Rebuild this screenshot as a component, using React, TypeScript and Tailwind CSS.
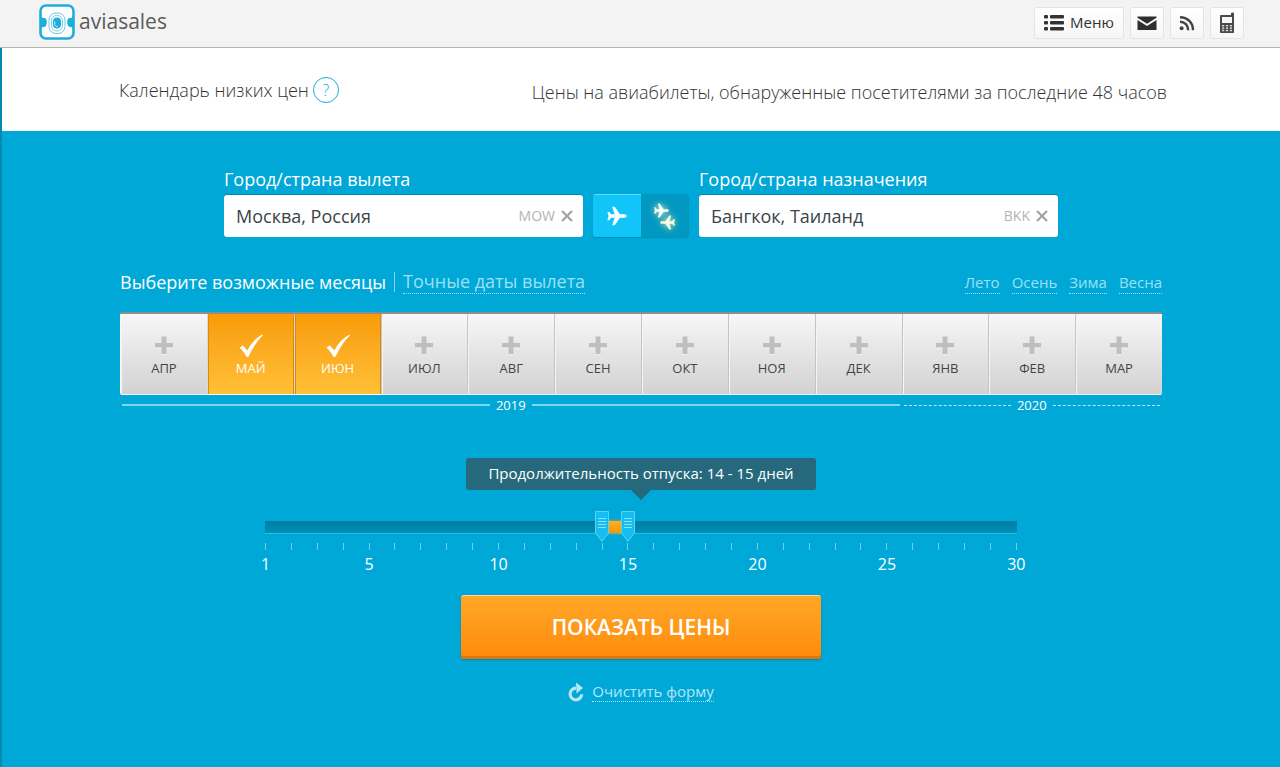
import { useState } from "react";
import clsx from "clsx";

const MONTHS = ["АПР", "МАЙ", "ИЮН", "ИЮЛ", "АВГ", "СЕН", "ОКТ", "НОЯ", "ДЕК", "ЯНВ", "ФЕВ", "МАР"];
const SEASONS = ["Лето", "Осень", "Зима", "Весна"];
const MAX_DAYS = 30;
const DAYS = Array.from({ length: MAX_DAYS }, (_, i) => i + 1);

const toPercent = (day: number) => ((day - 1) / (MAX_DAYS - 1)) * 100;

const PLANE =
  "M22.500 12c0-1-1.200-1.800-2.700-1.800h-4.600L9.500 2H6.800l2.600 8.200H5.600L3.400 7.500H1.500L2.800 12l-1.300 4.500h1.900l2.200-2.700h3.800L6.800 22h2.700l5.700-8.200h4.600c1.500 0 2.700-.8 2.700-1.800z";

const Logo = () => (
  <svg viewBox="0 0 36 36" className="size-9 shrink-0" aria-hidden="true">
    <rect x="1.500" y="1.500" width="33" height="33" rx="5.500" fill="#fff" stroke="#1eaedb" strokeWidth="2.600" />
    <path d="M2 12c.4 1.600 1.600 2 3 2 2 0 2.800 1.500 2.800 4s-.8 5-2.800 5c-1.400 0-2.600.5-3 2z" fill="#1eaedb" />
    <path d="M34 12c-.4 1.600-1.600 2-3 2-2 0-2.800 1.500-2.800 4s.8 5 2.800 5c1.400 0 2.600.5 3 2z" fill="#1eaedb" />
    <rect x="10" y="9" width="16" height="20.500" rx="7" fill="#fff" stroke="#6cc8e6" strokeWidth="1" />
    <rect x="12.500" y="11.500" width="11" height="15.500" rx="5.200" fill="none" stroke="#6cc8e6" strokeWidth=".9" />
    <rect x="14" y="13.500" width="8" height="11" rx="4" fill="#1eaedb" />
    <path d="M15.800 17.500v3c.6 1.600 1.700 2.200 3 2.100" fill="none" stroke="#d8f2fa" strokeWidth=".9" />
  </svg>
);

const ListIcon = () => (
  <svg viewBox="0 0 20 16" className="h-4 w-5" fill="#333" aria-hidden="true">
    {[0, 6, 12].map((y) => (
      <g key={y}>
        <rect x="0" y={y} width="4" height="3.500" rx="1" />
        <rect x="6" y={y} width="14" height="3.500" rx="1" />
      </g>
    ))}
  </svg>
);

const MailIcon = () => (
  <svg viewBox="0 0 20 16" className="h-4 w-5" fill="#2f2f2f" aria-hidden="true">
    <path d="M.5 1.500h19v1.300L10 8.800.5 2.800z" />
    <path d="M.5 4.900 10 10.900l9.500-6V15H.5z" />
  </svg>
);

const RssIcon = () => (
  <svg viewBox="0 0 16 16" className="size-4" fill="none" stroke="#444" aria-hidden="true">
    <circle cx="2.600" cy="13.300" r="2" fill="#444" stroke="none" />
    <path d="M1 6.800c4.800 0 8.200 3.500 8.200 8.500" strokeWidth="2.400" />
    <path d="M1 2.200c7.600 0 13 5.500 13 13.100" strokeWidth="2.400" />
  </svg>
);

const PhoneIcon = () => (
  <svg viewBox="0 0 16 22" className="h-[22px] w-4" aria-hidden="true">
    <path d="M12 1.500c0-1.300 3-1.300 3 0V20c0 .6-.4 1-1 1H2c-.6 0-1-.4-1-1V4c0-.6.400-1 1-1h10z" fill="#4a4a4a" />
    <rect x="3" y="5" width="10" height="6" fill="#f7f7f7" />
    {[13, 15.400, 17.800].map((y) => (
      <g key={y} fill="#ddd">
        <rect x="3" y={y} width="2.200" height="1.400" />
        <rect x="6.900" y={y} width="2.200" height="1.400" />
        <rect x="10.800" y={y} width="2.200" height="1.400" />
      </g>
    ))}
  </svg>
);

const OneWayIcon = () => (
  <svg viewBox="0 0 24 24" className="size-[22px]" fill="#fff" aria-hidden="true">
    <path d={PLANE} />
  </svg>
);

const RoundTripIcon = () => (
  <svg viewBox="0 0 30 32" className="h-8 w-[30px] drop-shadow-[0_0_3px_#fff3b0]" aria-hidden="true">
    <path d={PLANE} fill="#fff" transform="translate(3 2) scale(.7)" />
    <path d={PLANE} fill="#fffce0" transform="translate(26 14) scale(-.7 .7)" />
  </svg>
);

const CheckIcon = () => (
  <svg viewBox="0 0 26 24" className="h-6 w-[26px]" aria-hidden="true">
    <path d="M1.500 13.500 5 11.400l4.300 5.200C13 9.500 18 4 24.500.6l.5.600C19 7 14.500 14 10.500 22.800H8.400C6.500 19 4.300 16 1.500 13.500z" fill="#fff" />
  </svg>
);

const PlusIcon = () => (
  <svg viewBox="0 0 20 20" className="size-5" aria-hidden="true">
    <path d="M7.500 1.500h5v6h6v5h-6v6h-5v-6h-6v-5h6z" fill="#fff" opacity=".8" />
    <path d="M7.500.5h5v6.500h6.500v4.500h-6.500V18h-5v-6.500H1V7h6.500z" fill="#bfbfbf" />
  </svg>
);

const ReloadIcon = () => (
  <svg viewBox="0 0 16 20" className="h-5 w-4" aria-hidden="true">
    <path d="M13.700 12.200A5.800 5.800 0 1 1 8 6.200" fill="none" stroke="#b5e6f6" strokeWidth="3.200" />
    <path d="M8 .5l7 5.500L8.500 11.500z" fill="#b5e6f6" />
  </svg>
);

const SliderHandle = ({ day }: { day: number }) => (
  <svg
    viewBox="0 0 14 31"
    className="absolute -top-2.5 h-[31px] w-3.5 -translate-x-1/2"
    style={{ left: `${toPercent(day)}%` }}
    aria-hidden="true"
  >
    <path d="M.5.5h13v21.500L7 30.300.5 22z" fill="#16bdf0" stroke="#58d3f7" />
    <path d="M3 7.500h8M3 10.500h8M3 13.500h8M3 16.500h8" stroke="#8be2fb" />
  </svg>
);

interface CityFieldProps {
  id: string;
  label: string;
  code: string;
  initial: string;
}

const CityField = ({ id, label, code, initial }: CityFieldProps) => {
  const [value, setValue] = useState(initial);

  return (
    <div className="min-w-0 flex-1">
      <label htmlFor={id} className="mb-1 block text-lg leading-6 text-white">
        {label}
      </label>
      <div className="flex h-[42px] items-center rounded-[3px] bg-white pr-2 pl-3 shadow-[0_-1px_0_#0089b3]">
        <input
          id={id}
          value={value}
          onChange={(e) => setValue(e.target.value)}
          className="min-w-0 flex-1 bg-transparent text-lg leading-6 text-[#39444a] outline-none"
        />
        <span className="text-sm text-[#b3b3b3]">{code}</span>
        <button type="button" aria-label="Очистить" onClick={() => setValue("")} className="ml-1 p-0.5">
          <svg viewBox="0 0 12 12" className="size-3" stroke="#a3a3a3" strokeWidth="2.200" aria-hidden="true">
            <path d="M1 1l10 10M11 1L1 11" />
          </svg>
        </button>
      </div>
    </div>
  );
};

const Header = () => {
  const button =
    "flex h-8 items-center justify-center rounded-xs border border-[#e4e4e4] bg-gradient-to-b from-white to-[#f6f6f6]";

  return (
    <header className="flex h-12 items-center justify-between border-b border-[#b5b5b5] bg-[#f3f3f3] pr-9 pb-0.5 pl-[39px]">
      <a href="#" className="flex items-center gap-1 pb-0.5 text-[21px] leading-6 text-[#5a5a5a]">
        <Logo />
        <span className="pb-0.5">aviasales</span>
      </a>
      <nav className="flex gap-1.5">
        <button type="button" className={clsx(button, "w-[90px] gap-1.5 text-[15px] text-[#333]")}>
          <ListIcon />
          Меню
        </button>
        <button type="button" aria-label="Почта" className={clsx(button, "w-[34px]")}>
          <MailIcon />
        </button>
        <button type="button" aria-label="RSS" className={clsx(button, "w-[34px]")}>
          <RssIcon />
        </button>
        <button type="button" aria-label="Телефон" className={clsx(button, "w-[34px]")}>
          <PhoneIcon />
        </button>
      </nav>
    </header>
  );
};

const MonthPicker = () => {
  const [selected, setSelected] = useState<string[]>(["МАЙ", "ИЮН"]);

  const toggle = (month: string) =>
    setSelected((prev) => (prev.includes(month) ? prev.filter((m) => m !== month) : [...prev, month]));

  return (
    <>
      <div className="relative mt-[18px] grid grid-cols-12 overflow-hidden rounded-xs border-t-2 border-b border-t-[#8d8d8d] border-b-white">
        {MONTHS.map((month) => {
          const active = selected.includes(month);

          return (
            <label
              key={month}
              className={clsx(
                "relative flex h-20 cursor-pointer flex-col items-center border-l bg-gradient-to-b pt-5 text-[13px] leading-5 first:border-l-white",
                active
                  ? "border-[#d9d9d9] from-[#f99b04] to-[#ffc036] text-white shadow-[inset_1px_0_0_#d98b10,inset_-1px_0_0_#d98b10]"
                  : "border-[#c4c4c4] from-[#f7f7f7] to-[#d2d2d2] text-[#444] shadow-[inset_1px_0_0_#f5f5f5]"
              )}
            >
              <input type="checkbox" checked={active} onChange={() => toggle(month)} className="sr-only" />
              <span className="flex h-6 items-center">{active ? <CheckIcon /> : <PlusIcon />}</span>
              {month}
            </label>
          );
        })}
      </div>
      <div className="grid grid-cols-12 text-[13px] leading-5 text-white">
        <div className="col-span-9 flex items-center gap-1.5 px-0.5">
          <span className="flex-1 border-t-2 border-[#7fd6f0]" />
          2019
          <span className="flex-1 border-t-2 border-[#7fd6f0]" />
        </div>
        <div className="col-span-3 flex items-center gap-1.5 px-0.5">
          <span className="flex-1 border-t border-dashed border-[#c0ebf8]" />
          2020
          <span className="flex-1 border-t border-dashed border-[#c0ebf8]" />
        </div>
      </div>
    </>
  );
};

const DurationSlider = () => {
  const [from, setFrom] = useState(14);
  const [to, setTo] = useState(15);
  const range =
    "pointer-events-none absolute -inset-x-[7px] -top-2.5 h-8 w-[calc(100%+14px)] cursor-pointer opacity-0 [&::-webkit-slider-thumb]:pointer-events-auto";

  return (
    <div className="mx-auto mt-[43px] max-w-[752px]">
      <div className="relative mx-auto h-8 w-[350px] rounded-[3px] bg-[#26697c] text-center text-[15px] leading-[30px] text-white">
        Продолжительность отпуска: {from} - {to} дней
        <span className="absolute top-full left-1/2 -translate-x-1/2 border-x-10 border-t-10 border-x-transparent border-t-[#26697c]" />
      </div>
      <div className="relative mt-[31px] h-3 bg-gradient-to-b from-[#007da3] to-[#0090b8] shadow-[0_1px_0_#2ebbe2]">
        <span
          className="absolute inset-y-0 bg-gradient-to-b from-[#ffb020] to-[#f99300] shadow-[0_0_3px_#b5a94a]"
          style={{ left: `${toPercent(from)}%`, right: `${100 - toPercent(to)}%` }}
        />
        <SliderHandle day={from} />
        <SliderHandle day={to} />
        <input
          type="range"
          aria-label="Минимум дней"
          min={1}
          max={MAX_DAYS}
          value={from}
          onChange={(e) => setFrom(Math.min(Number(e.target.value), to))}
          className={range}
        />
        <input
          type="range"
          aria-label="Максимум дней"
          min={1}
          max={MAX_DAYS}
          value={to}
          onChange={(e) => setTo(Math.max(Number(e.target.value), from))}
          className={range}
        />
      </div>
      <div className="mt-2.5 flex h-8 justify-between text-base leading-6 text-white">
        {DAYS.map((day) => (
          <div key={day} className="flex w-px flex-col items-center">
            <span className="h-[7px] w-px shrink-0 bg-[#6fd2ee]" />
            {(day === 1 || day % 5 === 0) && <span className="mt-0.5">{day}</span>}
          </div>
        ))}
      </div>
    </div>
  );
};

export default function App() {
  const [roundTrip, setRoundTrip] = useState(false);

  return (
    <div className="flex min-h-screen flex-col bg-[#00a8d8] font-['Open_Sans','Noto_Sans',sans-serif]">
      <Header />
      <div className="flex-1 border-l-2 border-[#0089b3]">
        <section className="bg-white">
          <div className="mx-auto flex h-[83px] max-w-[1052px] items-center justify-between text-lg font-light text-[#333]">
            <h1 className="flex items-center gap-1 pl-1">
              Календарь низких цен
              <button
                type="button"
                aria-label="Справка"
                className="flex size-[26px] items-center justify-center rounded-full border border-[#1eaedb] text-base text-[#1eaedb]"
              >
                ?
              </button>
            </h1>
            <p className="pt-1">Цены на авиабилеты, обнаруженные посетителями за последние 48 часов</p>
          </div>
        </section>

        <form className="mx-auto max-w-[1042px] pt-9 pb-10" onSubmit={(e) => e.preventDefault()}>
          <div className="mx-auto flex max-w-[834px] items-end gap-2.5">
            <CityField id="origin" label="Город/страна вылета" code="MOW" initial="Москва, Россия" />
            <div className="flex h-[43px] w-24 overflow-hidden rounded-[3px] shadow-[0_1px_1px_#0090ba]">
              <button
                type="button"
                aria-label="В одну сторону"
                onClick={() => setRoundTrip(false)}
                className={clsx("flex flex-1 items-center justify-center", roundTrip ? "bg-[#0098c1]" : "border-t border-[#5bdcff] bg-[#12c5f8]")}
              >
                <OneWayIcon />
              </button>
              <button
                type="button"
                aria-label="Туда и обратно"
                onClick={() => setRoundTrip(true)}
                className={clsx("flex flex-1 items-center justify-center", roundTrip ? "border-t border-[#5bdcff] bg-[#12c5f8]" : "bg-[#0098c1]")}
              >
                <RoundTripIcon />
              </button>
            </div>
            <CityField id="destination" label="Город/страна назначения" code="BKK" initial="Бангкок, Таиланд" />
          </div>

          <div className="mt-[33px] flex items-center justify-between">
            <div className="flex items-center gap-2 text-lg leading-6 text-white">
              <h2>Выберите возможные месяцы</h2>
              <span className="h-5 w-px bg-[#7fd6f0]" />
              <a href="#" className="border-b border-dotted border-[#a8e2f4] leading-[23px] text-[#9be0f5]">
                Точные даты вылета
              </a>
            </div>
            <div className="flex gap-3 text-[15px]">
              {SEASONS.map((season) => (
                <a key={season} href="#" className="border-b border-dotted border-[#a8e2f4] leading-[22px] text-[#9be0f5]">
                  {season}
                </a>
              ))}
            </div>
          </div>

          <MonthPicker />
          <DurationSlider />

          <div className="mt-5 flex flex-col items-center">
            <button
              type="submit"
              className="h-16 w-[360px] rounded-[3px] border-t border-[#ffd9a0] bg-gradient-to-b from-[#ffa726] to-[#ff8a08] text-[21px] font-semibold text-white shadow-[inset_0_-3px_0_#d9780f,0_1px_2px_#1c7d95]"
            >
              ПОКАЗАТЬ ЦЕНЫ
            </button>
            <button type="reset" className="mt-[22px] flex items-center gap-2 text-[15px] text-[#b5e6f6]">
              <ReloadIcon />
              <span className="border-b border-dotted border-[#b5e6f6] leading-5">Очистить форму</span>
            </button>
          </div>
        </form>
      </div>
    </div>
  );
}
